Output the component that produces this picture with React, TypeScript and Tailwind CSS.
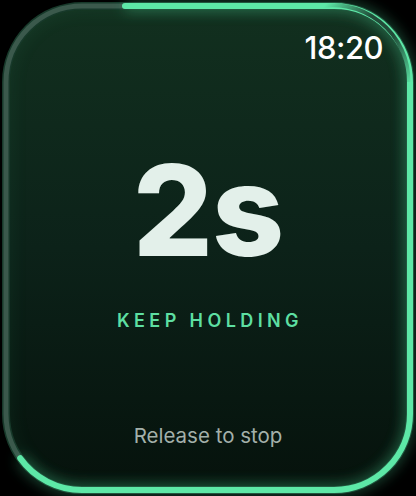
const W = 404;
const H = 484;
const R = 76;
const STRAIGHT_X = W - 2 * R;
const STRAIGHT_Y = H - 2 * R;
const ARC = (Math.PI * R) / 2;
const TOTAL = 2 * STRAIGHT_X + 2 * STRAIGHT_Y + 4 * ARC;
const START = 43;
const END = STRAIGHT_X + ARC + STRAIGHT_Y + ARC + STRAIGHT_X + ARC * (54 / 90);
const PROGRESS = END - START;

function Ring() {
  return (
    <svg
      className="absolute inset-0 pointer-events-none"
      width="416"
      height="496"
      viewBox="0 0 416 496"
    >
      <defs>
        <filter id="glow" x="-20%" y="-20%" width="140%" height="140%">
          <feGaussianBlur stdDeviation="7" />
        </filter>
        <linearGradient id="corner" x1="330" y1="0" x2="416" y2="80" gradientUnits="userSpaceOnUse">
          <stop offset="0" stopColor="#0f2a1f" stopOpacity="0" />
          <stop offset="0.35" stopColor="#1c3a2d" stopOpacity="0.9" />
          <stop offset="0.6" stopColor="#1c3a2d" stopOpacity="0.9" />
          <stop offset="1" stopColor="#0f2a1f" stopOpacity="0" />
        </linearGradient>
      </defs>
      {/* outer dark band + track */}
      <rect x="6" y="6" width={W} height={H} rx={R} fill="none" stroke="#17392a" strokeWidth="8" />
      <rect x="6" y="6" width={W} height={H} rx={R} fill="none" stroke="#3b594c" strokeWidth="5" />
      {/* glow */}
      <rect
        x="6"
        y="6"
        width={W}
        height={H}
        rx={R}
        fill="none"
        stroke="#4fe0a0"
        strokeOpacity="0.45"
        strokeWidth="8"
        strokeDasharray={`${PROGRESS} ${TOTAL}`}
        strokeDashoffset={-START}
        filter="url(#glow)"
      />
      {/* progress */}
      <rect
        x="6"
        y="6"
        width={W}
        height={H}
        rx={R}
        fill="none"
        stroke="#5de8a7"
        strokeWidth="6"
        strokeLinecap="round"
        strokeDasharray={`${PROGRESS} ${TOTAL}`}
        strokeDashoffset={-START}
      />
      {/* top-right gloss */}
      <path
        d={`M ${6 + W - R - 20} 7.5 A ${R} ${R} 0 0 1 ${6 + W - 1.5} ${6 + R}`}
        fill="none"
        stroke="url(#corner)"
        strokeWidth="4"
      />
    </svg>
  );
}

export default function App() {
  return (
    <div className="relative w-[416px] h-[496px] bg-black overflow-hidden">
      <div className="w-full h-full p-[4px]">
        <div className="w-full h-full rounded-[78px] bg-gradient-to-b from-[#12301f] via-[#0c2219] to-[#06120c] flex flex-col items-center shadow-[inset_0_0_24px_rgba(80,220,150,0.12)]">
          <div
            className="self-end pr-[29px] pt-[28px] text-white text-[31px] font-medium tracking-[-0.5px] leading-none"
            style={{ fontFamily: "Inter, 'Noto Sans', sans-serif" }}
          >
            18:20
          </div>
          <div
            className="mt-[84px] text-[#e3f0ea] text-[126px] font-extrabold leading-none tracking-[-1px]"
            style={{ fontFamily: "Inter, 'Noto Sans', sans-serif" }}
          >
            2s
          </div>
          <div
            className="mt-[39px] pl-[4px] text-[#5ddfa2] text-[18px] font-semibold tracking-[4.4px] leading-none"
            style={{ fontFamily: "Inter, 'Noto Sans', sans-serif" }}
          >
            KEEP HOLDING
          </div>
          <div className="flex-1" />
          <div
            className="pb-[46px] text-[#a3b0aa] text-[20.5px] leading-none"
            style={{ fontFamily: "Inter, 'Noto Sans', sans-serif" }}
          >
            Release to stop
          </div>
        </div>
      </div>
      <Ring />
    </div>
  );
}
